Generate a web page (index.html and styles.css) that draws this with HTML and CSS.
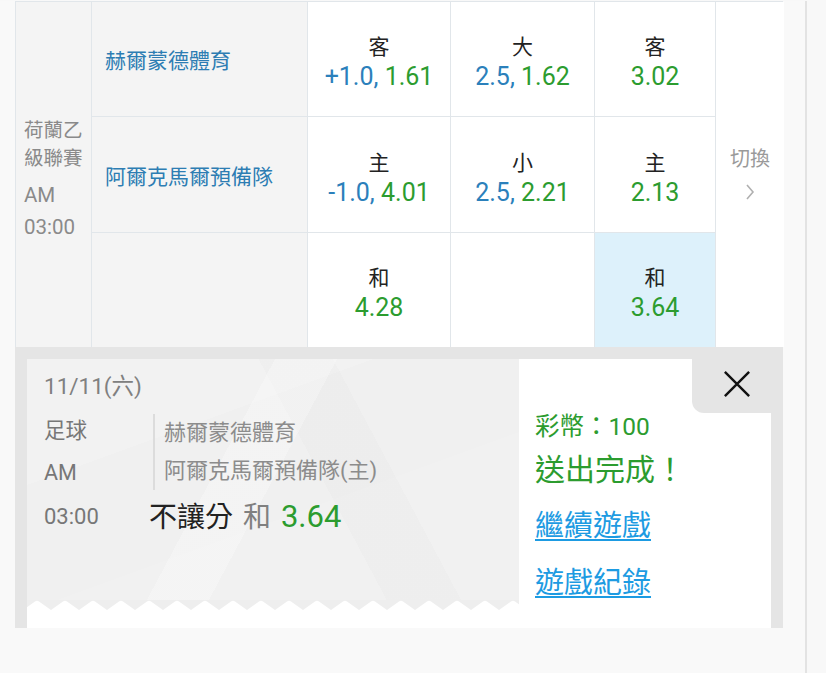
FILE: index.html
```html
<!DOCTYPE html>
<html lang="zh-Hant">
<head>
<meta charset="utf-8">
<title>投注完成</title>
<link rel="stylesheet" href="styles.css">
</head>
<body>
<div class="page">
  <div class="odds">
    <div class="league">
      <div class="lg-name">荷蘭乙<br>級聯賽</div>
      <div class="lg-time">AM<br>03:00</div>
    </div>

    <div class="team">赫爾蒙德體育</div>
    <div class="cell"><div class="lbl">客</div><div class="val"><span class="b">+1.0,</span> <span class="g">1.61</span></div></div>
    <div class="cell"><div class="lbl">大</div><div class="val"><span class="b">2.5,</span> <span class="g">1.62</span></div></div>
    <div class="cell"><div class="lbl">客</div><div class="val"><span class="g">3.02</span></div></div>

    <div class="team">阿爾克馬爾預備隊</div>
    <div class="cell"><div class="lbl">主</div><div class="val"><span class="b">-1.0,</span> <span class="g">4.01</span></div></div>
    <div class="cell"><div class="lbl">小</div><div class="val"><span class="b">2.5,</span> <span class="g">2.21</span></div></div>
    <div class="cell"><div class="lbl">主</div><div class="val"><span class="g">2.13</span></div></div>

    <div class="team"></div>
    <div class="cell"><div class="lbl">和</div><div class="val"><span class="g">4.28</span></div></div>
    <div class="cell"></div>
    <div class="cell selected"><div class="lbl">和</div><div class="val"><span class="g">3.64</span></div></div>

    <div class="switch">
      <div class="sw-text">切換</div>
      <svg class="chev" width="10" height="16" viewBox="0 0 10 16"><polyline points="2,1 8,8 2,15" fill="none" stroke="#b0b0b0" stroke-width="1.6"/></svg>
    </div>
  </div>

  <div class="result">
    <div class="ticket">
      <div class="info">
        <div class="info-body">
          <div class="date">11/11(六)</div>
          <div class="detail">
            <div class="meta">足球<br>AM</div>
            <div class="teams">
              <div>赫爾蒙德體育</div>
              <div>阿爾克馬爾預備隊(主)</div>
            </div>
            <div class="time">03:00</div>
            <div class="bet"><span class="bet-type">不讓分</span> <span class="bet-pick">和</span> <span class="bet-odds">3.64</span></div>
          </div>
        </div>
        <svg class="teeth" width="492" height="10" viewBox="0 0 492 10" preserveAspectRatio="none">
          <defs>
            <pattern id="tooth" x="-4" y="0" width="28" height="10" patternUnits="userSpaceOnUse">
              <path d="M0 10 L12 1.5 Q14 0 16 1.5 L28 10 Z" fill="#ffffff"/>
            </pattern>
          </defs>
          <rect width="492" height="10" fill="#eeeeee"/>
          <rect width="492" height="10" fill="url(#tooth)"/>
        </svg>
        <div class="info-foot"></div>
      </div>
      <div class="status">
        <div class="coins">彩幣：100</div>
        <div class="done">送出完成！</div>
        <a class="link" href="#">繼續遊戲</a>
        <a class="link" href="#">遊戲紀錄</a>
      </div>
    </div>
    <div class="close">
      <svg width="30" height="30" viewBox="0 0 30 30"><path d="M2 2 L28 28 M28 2 L2 28" stroke="#111" stroke-width="2.6" fill="none"/></svg>
    </div>
  </div>
</div>
</body>
</html>
```

FILE: styles.css
```css
* { box-sizing: border-box; }

html, body {
  margin: 0;
  padding: 0;
  background: #f8f8f8;
  font-family: Roboto, "Noto Sans CJK TC", sans-serif;
}

.page {
  width: 807px;
  min-height: 673px;
  padding: 0 22px 0 15px;
  border-right: 2px solid #e3e3e3;
  background: #f9f9f9;
}

/* ---------- odds table ---------- */
.odds {
  display: grid;
  grid-template-columns: 75px 215px 142px 143px 120px 68px;
  grid-template-rows: 114px 115px 114px;
  gap: 1px;
  padding: 1px 1px 0 1px;
  margin-top: 1px;
  background: #e1e6ea;
}

.league {
  grid-column: 1;
  grid-row: 1 / 4;
  background: #f4f4f4;
  padding: 11px 0 0 8px;
  display: flex;
  flex-direction: column;
  justify-content: center;
  color: #8a8a8a;
  font-size: 19.5px;
}
.lg-name { line-height: 28px; }
.lg-time { line-height: 32px; margin-top: 6px; font-size: 20.5px; }

.team {
  background: #f4f4f4;
  display: flex;
  align-items: center;
  padding-left: 13px;
  color: #2d7db3;
  font-size: 21px;
}

.cell {
  background: #ffffff;
  display: flex;
  flex-direction: column;
  align-items: center;
  justify-content: center;
  padding-top: 6px;
}
.cell.selected { background: #ddf1fb; }

.lbl {
  font-size: 21px;
  line-height: 30px;
  color: #222;
}
.val {
  font-size: 25px;
  line-height: 30px;
  white-space: nowrap;
}
.b { color: #2b80bb; }
.g { color: #2c9c2f; }

.switch {
  grid-column: 6;
  grid-row: 1 / 4;
  background: #ffffff;
  display: flex;
  flex-direction: column;
  align-items: center;
  justify-content: center;
  color: #9a9a9a;
  font-size: 20px;
  padding-bottom: 4px;
}
.sw-text { line-height: 26px; }
.chev { margin-top: 12px; }

/* ---------- result ticket ---------- */
.result {
  position: relative;
  background: #e5e5e5;
  padding: 12px 12px 0 12px;
}

.ticket {
  display: flex;
  height: 269px;
  background: #ffffff;
}

.info {
  width: 492px;
  display: flex;
  flex-direction: column;
}
.info-body {
  flex: 1;
  padding: 12px 0 0 17px;
  background:
    linear-gradient(118deg, rgba(255,255,255,0) 0 40%, rgba(255,255,255,0.25) 40% 50%, rgba(255,255,255,0) 50%),
    linear-gradient(62deg, rgba(0,0,0,0) 0 58%, rgba(0,0,0,0.012) 58% 70%, rgba(0,0,0,0) 70%),
    linear-gradient(160deg, #f2f2f2 0 30%, #f0f0f0 30% 60%, #f1f1f1 60%);
}
.teeth { display: block; width: 492px; height: 10px; }
.info-foot { height: 18px; background: #ffffff; }

.date {
  font-size: 22.5px;
  line-height: 30px;
  color: #808080;
}

.detail {
  display: grid;
  grid-template-columns: 105px auto;
  margin-top: 9px;
}
.meta {
  font-size: 21.5px;
  line-height: 42px;
  color: #777;
}
.teams {
  align-self: center;
  margin-left: 4px;
  border-left: 2px solid #dcdcdc;
  padding-left: 9px;
  font-size: 22px;
  line-height: 38px;
  color: #8c8c8c;
  white-space: nowrap;
}
.time {
  font-size: 22px;
  line-height: 46px;
  color: #777;
}
.bet {
  font-size: 28px;
  line-height: 46px;
  white-space: nowrap;
  word-spacing: 3px;
}
.bet-type { color: #222; }
.bet-pick { color: #808080; }
.bet-odds { color: #2c9c2f; font-size: 31px; }

.status {
  flex: 1;
  padding: 52px 0 0 16px;
  display: flex;
  flex-direction: column;
  align-items: flex-start;
}
.coins {
  font-size: 24.5px;
  line-height: 32px;
  color: #2c9c2f;
}
.done {
  margin-top: 7px;
  font-size: 30px;
  line-height: 40px;
  color: #2c9c2f;
}
.link {
  font-size: 29px;
  line-height: 40px;
  color: #1d9be2;
  text-decoration: underline;
  text-decoration-thickness: 2px;
  text-underline-offset: 3px;
}
.done + .link { margin-top: 16px; }
.link + .link { margin-top: 17px; }

.close {
  position: absolute;
  top: 0;
  right: 0;
  width: 91px;
  height: 66px;
  background: #e5e5e5;
  border-bottom-left-radius: 12px;
  display: flex;
  align-items: flex-start;
  justify-content: center;
  padding-top: 23px;
  padding-right: 2px;
}
.close svg { width: 28px; height: 28px; }
```
